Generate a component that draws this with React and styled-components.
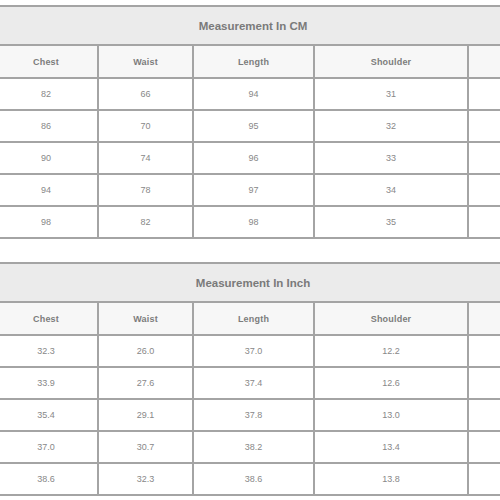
import styled, {createGlobalStyle} from 'styled-components';

const GlobalStyle = createGlobalStyle`
  body {
    margin: 0;
    background: #ffffff;
    font-family: "Liberation Sans", Arial, sans-serif;
  }
`;

const cmRows = [
  ['82', '66', '94', '31'],
  ['86', '70', '95', '32'],
  ['90', '74', '96', '33'],
  ['94', '78', '97', '34'],
  ['98', '82', '98', '35'],
];

const inchRows = [
  ['32.3', '26.0', '37.0', '12.2'],
  ['33.9', '27.6', '37.4', '12.6'],
  ['35.4', '29.1', '37.8', '13.0'],
  ['37.0', '30.7', '38.2', '13.4'],
  ['38.6', '32.3', '38.6', '13.8'],
];

const columns = ['Chest', 'Waist', 'Length', 'Shoulder', ''];
const widths = [104, 95, 121, 154, 44];

export default function App() {
  return (
    <Page>
      <GlobalStyle />
      <SizeTable title="Measurement In CM" rows={cmRows} />
      <SizeTable title="Measurement In Inch" rows={inchRows} />
    </Page>
  );
}

function SizeTable({title, rows}) {
  return (
    <Table>
      <colgroup>
        {widths.map((w, i) => (
          <col key={i} style={{width: w}} />
        ))}
      </colgroup>
      <tbody>
        <TitleRow>
          <TitleCell colSpan={5}>{title}</TitleCell>
        </TitleRow>
        <HeadRow>
          {columns.map((c, i) => (
            <HeadCell key={i}>{c}</HeadCell>
          ))}
        </HeadRow>
        {rows.map((row, i) => (
          <DataRow key={i}>
            {row.map((v, j) => (
              <DataCell key={j}>{v}</DataCell>
            ))}
            <DataCell />
          </DataRow>
        ))}
      </tbody>
    </Table>
  );
}

const Page = styled.div`
  width: 500px;
  height: 500px;
  overflow: hidden;
  padding-top: 5px;
  box-sizing: border-box;
  display: flex;
  flex-direction: column;
  gap: 23px;
`;

const Table = styled.table`
  margin-left: -7px;
  width: 518px;
  table-layout: fixed;
  border-collapse: collapse;
  flex-shrink: 0;

  td {
    border: 2px solid #a4a4a4;
    text-align: center;
    padding: 0;
    color: #7c7c7c;
  }
`;

const TitleRow = styled.tr`
  height: 39px;
`;

const TitleCell = styled.td`
  background: #ebebeb;
  font-size: 11.5px;
  font-weight: bold;
  color: #7a7a7a !important;
  border-left: none !important;
  border-right: none !important;
`;

const HeadRow = styled.tr`
  height: 33px;
`;

const HeadCell = styled.td`
  background: #f7f7f7;
  font-size: 9px;
  font-weight: bold;
  letter-spacing: 0.2px;
`;

const DataRow = styled.tr`
  height: 32px;
`;

const DataCell = styled.td`
  background: #ffffff;
  font-size: 9px;
  color: #888888 !important;
`;
